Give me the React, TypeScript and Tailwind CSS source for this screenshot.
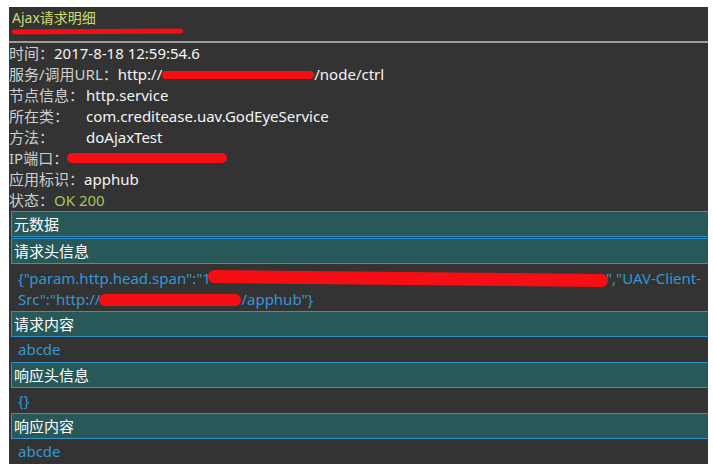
import React from "react";

const font = { fontFamily: '"Noto Sans", "Noto Sans CJK SC", sans-serif' };

function Blot({ w, h, className = "" }: { w: string; h: string; className?: string }) {
  return (
    <span
      className={`inline-block rounded-full bg-[#f50f14] align-middle ${w} ${h} ${className}`}
    />
  );
}

function InfoRow({
  label,
  children,
  labelWidth = "",
}: {
  label: string;
  children: React.ReactNode;
  labelWidth?: string;
}) {
  return (
    <div className="flex items-center h-[21px] whitespace-nowrap">
      <span className={`text-[#cfcfcf] ${labelWidth}`}>{label}</span>
      <span className="text-[#f4f4f4]">{children}</span>
    </div>
  );
}

function SectionHeader({ title, className = "" }: { title: string; className?: string }) {
  return (
    <div
      className={`ml-[2px] h-[26px] w-[697px] flex items-center pl-[2px] border border-r-0 border-[#2f93c9] bg-[#285858] text-white ${className}`}
    >
      {title}
    </div>
  );
}

function Body({ children, className = "" }: { children: React.ReactNode; className?: string }) {
  return (
    <div className={`pl-[9px] text-[#3497d4] whitespace-nowrap ${className}`}>{children}</div>
  );
}

export default function App() {
  return (
    <div className="w-[713px] h-[468px] bg-white pt-[7px] pl-[9px]" style={font}>
      <div className="w-[699px] h-[457px] bg-[#333333] overflow-hidden text-[15px]">
        {/* title */}
        <div className="h-[34px] pl-[3px] pt-[2px]">
          <div className="text-[14px] leading-[18px] text-[#cfdc6e]">Ajax请求明细</div>
          <div className="mt-[2px] h-[5px] w-[171px] rounded-full bg-[#f50f14] -rotate-[0.4deg]" />
        </div>
        <div className="h-[2px] bg-[#9c9c9c]" />

        {/* info lines */}
        <div className="leading-[21px]">
          <InfoRow label="时间：">2017-8-18 12:59:54.6</InfoRow>
          <InfoRow label="服务/调用URL：">
            http://
            <Blot w="w-[152px]" h="h-[8px]" className="-mt-[1px]" />
            /node/ctrl
          </InfoRow>
          <InfoRow label="节点信息：" labelWidth="w-[77px]">http.service</InfoRow>
          <InfoRow label="所在类：" labelWidth="w-[77px]">com.creditease.uav.GodEyeService</InfoRow>
          <InfoRow label="方法：" labelWidth="w-[77px]">doAjaxTest</InfoRow>
          <InfoRow label="IP端口：">
            <Blot w="w-[160px]" h="h-[10px]" className="-mt-[3px] -ml-[1px]" />
          </InfoRow>
          <InfoRow label="应用标识：">apphub</InfoRow>
          <div className="flex items-center h-[21px]">
            <span className="text-[#cfcfcf]">状态：</span>
            <span className="text-[#a2c95c]">OK 200</span>
          </div>
        </div>

        {/* sections */}
        <SectionHeader title="元数据" />
        <SectionHeader title="请求头信息" className="mt-[1px]" />
        <Body className="pt-[4px] pb-[1px] leading-[21px]">
          <div className="flex items-center">
            <span>{'{"param.http.head.span":"1'}</span>
            <Blot w="w-[400px]" h="h-[13px]" className="-ml-[3px] rotate-[0.6deg]" />
            <span className="-ml-[2px]">{'","UAV-Client-'}</span>
          </div>
          <div className="flex items-center">
            <span>{'Src":"http://'}</span>
            <Blot w="w-[142px]" h="h-[12px]" className="-ml-[1px]" />
            <span>{'/apphub"}'}</span>
          </div>
        </Body>
        <SectionHeader title="请求内容" />
        <Body className="h-[25px] flex items-center">abcde</Body>
        <SectionHeader title="响应头信息" />
        <Body className="h-[25px] flex items-center">{"{}"}</Body>
        <SectionHeader title="响应内容" />
        <Body className="h-[25px] flex items-center">abcde</Body>
      </div>
    </div>
  );
}
